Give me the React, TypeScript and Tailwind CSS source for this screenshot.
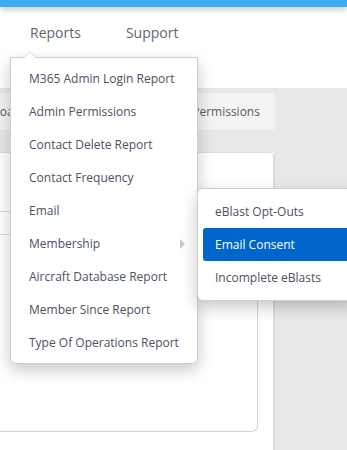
import React from "react";

const items = [
  "M365 Admin Login Report",
  "Admin Permissions",
  "Contact Delete Report",
  "Contact Frequency",
  "Email",
  "Membership",
  "Aircraft Database Report",
  "Member Since Report",
  "Type Of Operations Report",
];

export default function App() {
  return (
    <div
      className="relative w-[347px] h-[450px] overflow-hidden bg-white"
      style={{ fontFamily: '"Open Sans", "Noto Sans", sans-serif' }}
    >
      <div className="relative z-10 h-[7px] bg-[#3badf0] shadow-[0_2px_6px_rgba(0,0,0,0.25)]" />
      <nav className="flex h-[50px] items-center text-[14px] text-[#5f6672]">
        <span className="ml-[30px]">Reports</span>
        <span className="ml-[45px]">Support</span>
      </nav>
      <div className="h-[31px] bg-white" />
      <div className="h-[64px] bg-[#e8e8e8] pt-[5px]">
        <div className="ml-[-48px] flex gap-[10px] text-[12px] text-[#555b66]">
          <div className="flex h-[37px] shrink-0 items-center rounded-[4px] bg-[#f3f3f3] px-[12px]">Dashboard</div>
          <div className="flex h-[37px] w-[227px] shrink-0 items-center justify-end rounded-[4px] bg-[#f3f3f3] px-[15px]">
            Admin Permissions
          </div>
        </div>
      </div>
      <div className="flex h-[300px]">
        <div className="w-[274px] rounded-tr-[5px] border-t border-r border-[#dddddd] bg-white pr-[15px] pt-[42px]">
          <div className="h-[237px] rounded-br-[6px] border-r border-b border-[#d4d4d4] bg-white">
            <div className="h-[17px] border-b border-[#dddddd]" />
            <div className="h-[23px] border-b border-[#dddddd]" />
          </div>
        </div>
        <div className="flex-1 border-l border-[#dadada] bg-[#e8e8e8]" />
      </div>

      {/* Dropdown */}
      <div className="absolute left-[10px] top-[57px] w-[188px] rounded-b-[6px] border border-[#cfcfcf] bg-white py-[4px] shadow-[0_6px_16px_rgba(0,0,0,0.22)]">
        <div className="absolute left-[12px] top-[-7px] h-0 w-0 border-x-[7px] border-b-[7px] border-x-transparent border-b-[#cfcfcf]" />
        <div className="absolute left-[13px] top-[-6px] h-0 w-0 border-x-[6px] border-b-[6px] border-x-transparent border-b-white" />
        {items.map((t) => (
          <div
            key={t}
            className="relative flex h-[33px] items-center pl-[18px] text-[12px] text-[#4b5263]"
          >
            {t}
            {t === "Membership" && (
              <span className="absolute right-[12px] top-1/2 h-0 w-0 -translate-y-1/2 border-y-[5px] border-l-[5px] border-y-transparent border-l-[#c8c8c8]" />
            )}
          </div>
        ))}
      </div>

      {/* Submenu */}
      <div className="absolute left-[197px] top-[188px] w-[160px] rounded-l-[6px] border border-[#d0d0d0] bg-white py-[6px] pl-[5px] shadow-[0_6px_16px_rgba(0,0,0,0.22)]">
        <div className="flex h-[33px] items-center pl-[12px] text-[12px] text-[#4b5263]">eBlast Opt-Outs</div>
        <div className="flex h-[33px] items-center rounded-[3px] bg-[#0066cc] pl-[12px] text-[12px] text-white">
          Email Consent
        </div>
        <div className="flex h-[33px] items-center pl-[12px] text-[12px] text-[#4b5263]">Incomplete eBlasts</div>
      </div>
    </div>
  );
}
